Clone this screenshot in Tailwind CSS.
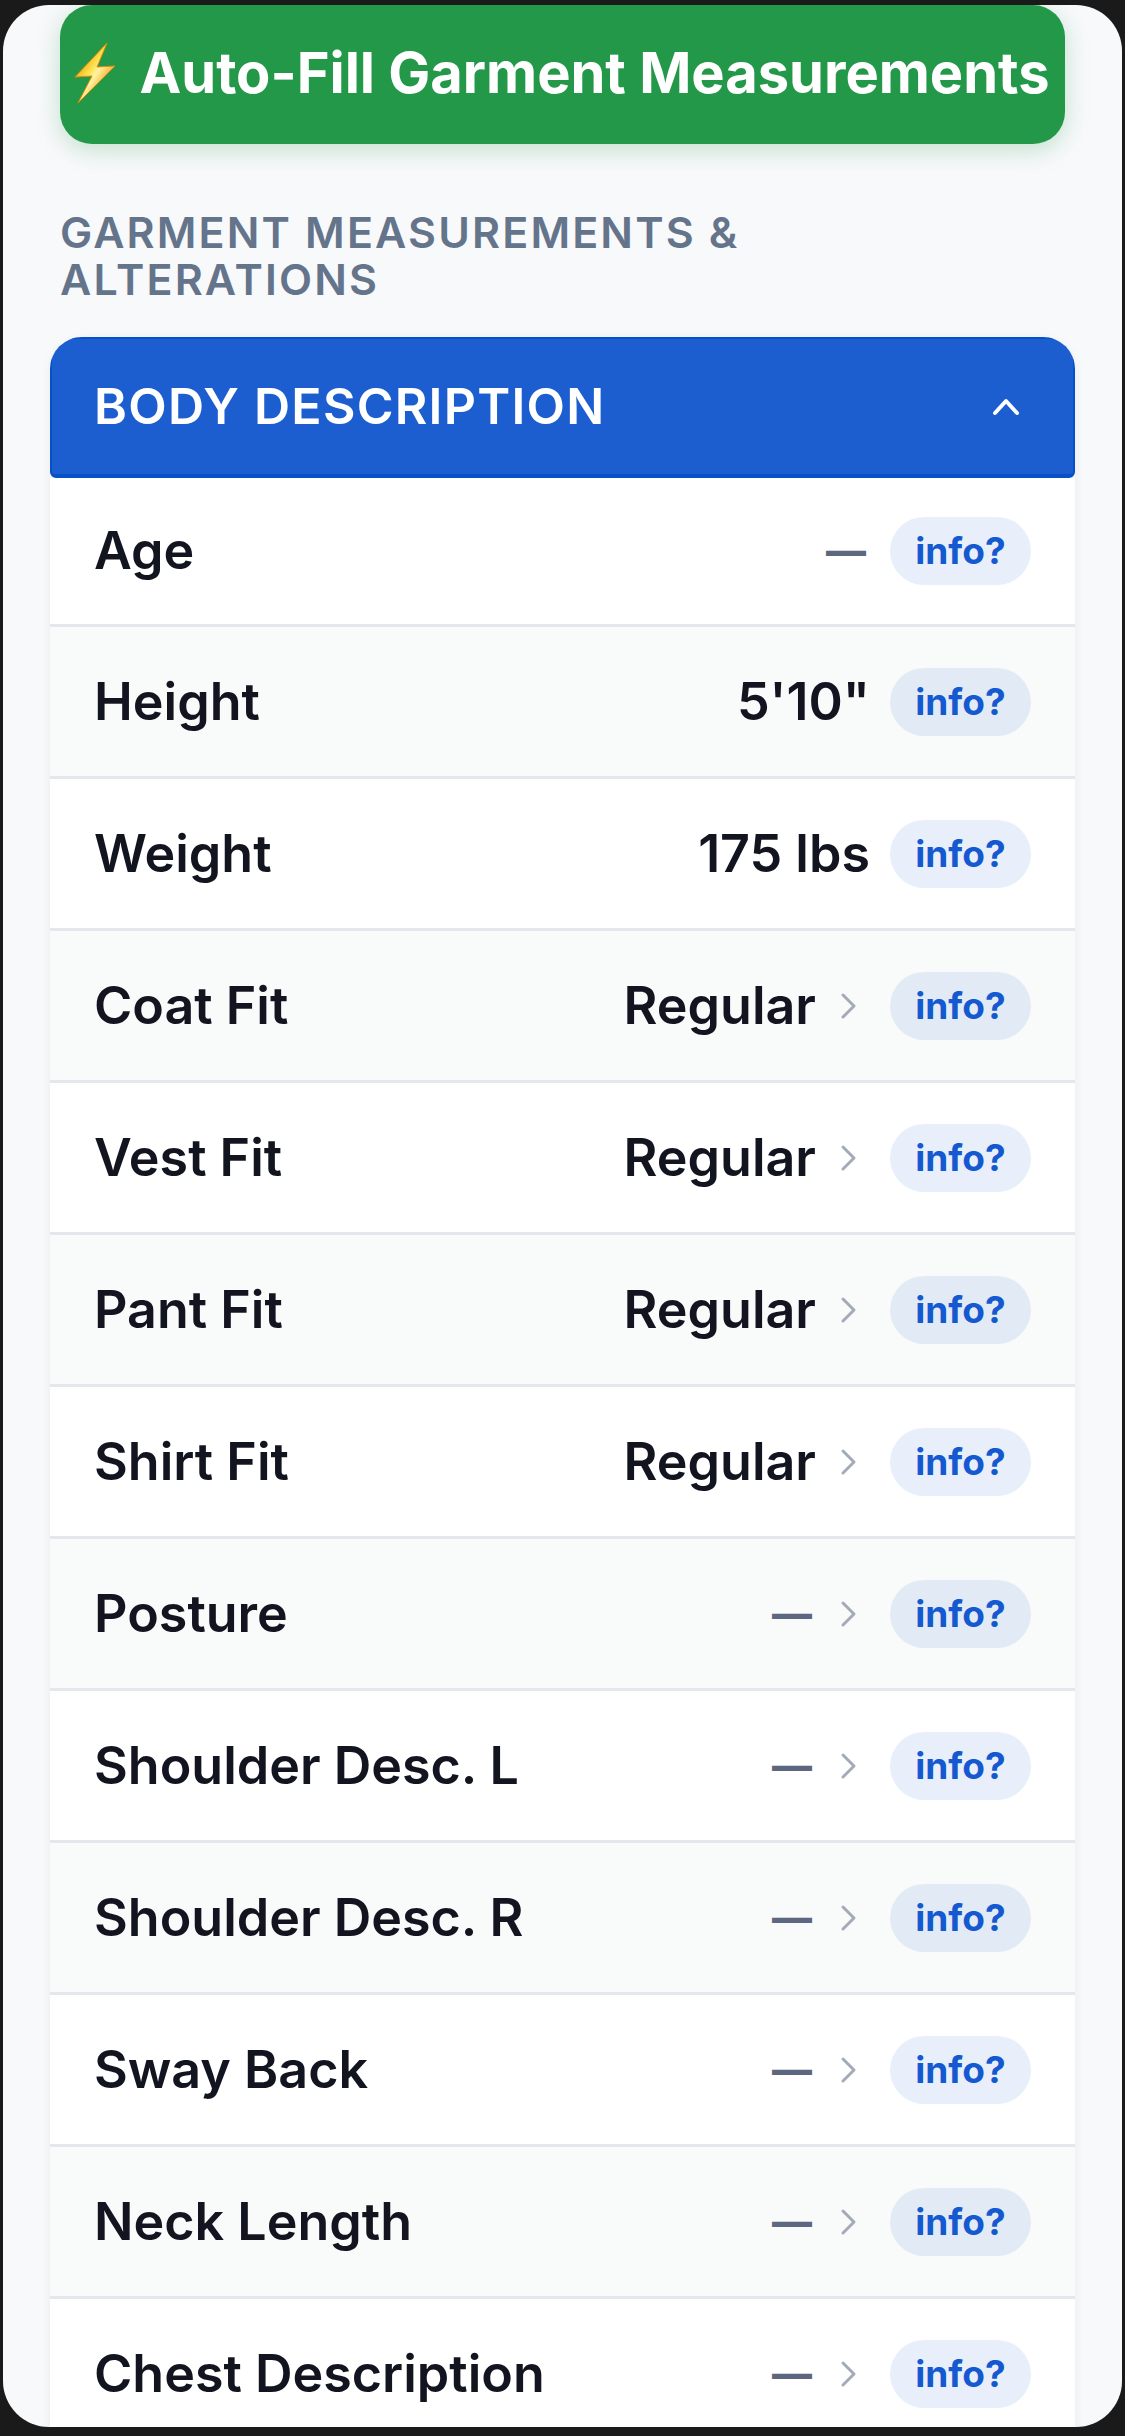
<!DOCTYPE html>
<html lang="en">
  <head>
    <meta charset="UTF-8" />
    <meta name="viewport" content="width=device-width, initial-scale=1.0" />
    <script src="https://cdn.jsdelivr.net/npm/@tailwindcss/browser@4"></script>
    <title>Garment Measurements</title>
  </head>
  <body
    class="h-screen overflow-hidden bg-[#1a1a1a] px-[3px] pt-[5px] pb-[9px] font-['Inter','Open_Sans',sans-serif] text-[#12151f]"
  >
    <main
      class="h-full overflow-hidden rounded-[46px] bg-[#f8f9fb] px-[47px]"
    >
      <div class="px-[10px]">
        <button
          id="autoFill"
          class="flex h-[139px] w-full cursor-pointer items-center justify-center gap-6 rounded-[32px] bg-[#249849] pb-1 text-[56px] font-bold whitespace-nowrap text-white shadow-[0_6px_24px_rgba(36,152,73,0.25)]"
        >
          <svg class="h-[62px] w-[40px] shrink-0" viewBox="0 0 40 62">
            <defs>
              <linearGradient id="bolt" x1="0" y1="0" x2="1" y2="1">
                <stop offset="0.2" stop-color="#f09a10" />
                <stop offset="0.42" stop-color="#ffe14d" />
                <stop offset="0.52" stop-color="#fff3a0" />
                <stop offset="0.8" stop-color="#f08c00" />
              </linearGradient>
            </defs>
            <path
              d="M32 1 L0 35 L17 34 L3 61 L40 24 L22 25 Z"
              fill="url(#bolt)"
              stroke="#e08a0c"
              stroke-width="1"
            />
          </svg>
          Auto-Fill Garment Measurements
        </button>
        <h2
          class="mt-[65px] mb-[34px] max-w-[760px] text-[43px] leading-[47px] font-semibold tracking-wider text-[#64748b] uppercase"
        >
          Garment Measurements &amp; Alterations
        </h2>
      </div>

      <section
        class="overflow-hidden rounded-t-[32px] bg-white shadow-[0_3px_12px_rgba(0,0,0,0.06)]"
      >
        <button
          id="toggle"
          aria-expanded="true"
          class="flex h-[141px] w-full cursor-pointer items-center justify-between rounded-b-[6px] border-2 border-b-4 border-[#0650c8] bg-[#1c5ed0] pr-[52px] pl-[42px] text-[50px] font-semibold tracking-wide text-white uppercase"
        >
          Body Description
          <svg
            class="h-[20px] w-[30px]"
            viewBox="0 0 30 20"
            fill="none"
            stroke="currentColor"
            stroke-width="4"
            stroke-linecap="round"
            stroke-linejoin="round"
          >
            <path d="M4 16 L15 4 L26 16" />
          </svg>
        </button>
        <ul id="rows"></ul>
      </section>
    </main>

    <script>
      const rows = document.querySelector("#rows");
      const toggle = document.querySelector("#toggle");

      const fields = [
        { label: "Age" },
        { label: "Height", value: `5'10"` },
        { label: "Weight", value: "175 lbs" },
        { label: "Coat Fit", value: "Regular", select: true },
        { label: "Vest Fit", value: "Regular", select: true },
        { label: "Pant Fit", value: "Regular", select: true },
        { label: "Shirt Fit", value: "Regular", select: true },
        { label: "Posture", select: true },
        { label: "Shoulder Desc. L", select: true },
        { label: "Shoulder Desc. R", select: true },
        { label: "Sway Back", select: true },
        { label: "Neck Length", select: true },
        { label: "Chest Description", select: true },
      ];

      const chevron = `
        <svg class="h-[28px] w-[18px]" viewBox="0 0 18 28" fill="none" stroke="#a3abb8" stroke-width="3" stroke-linecap="round" stroke-linejoin="round">
          <path d="M3 3 L14 14 L3 25" />
        </svg>`;

      const generateRow = ({ label, value, select }) => {
        const text = value
          ? `<span>${value}</span>`
          : `<span class="pr-1 text-[40px] font-extrabold text-[#5b6880]">—</span>`;
        return `
        <li class="flex h-[152px] items-center border-b-3 border-[#e4e7ec] px-[44px] text-[52px] font-semibold first:h-[149px] odd:bg-white even:bg-[#f9fbfa]">
          <span>${label}</span>
          <button class="ml-auto flex cursor-pointer items-center gap-6" aria-label="Edit ${label}">
            ${text}
            ${select ? `<span class="pr-3">${chevron}</span>` : ""}
          </button>
          <button class="ml-5 h-[68px] w-[141px] cursor-pointer rounded-full bg-[#1c5ed0]/10 text-[37px] font-bold text-[#1459d0]" aria-label="info about ${label}">info?</button>
        </li>`;
      };

      rows.innerHTML = fields.map(generateRow).join("");

      toggle.addEventListener("click", () => {
        const hidden = rows.classList.toggle("hidden");
        toggle.setAttribute("aria-expanded", !hidden);
      });
    </script>
  </body>
</html>
